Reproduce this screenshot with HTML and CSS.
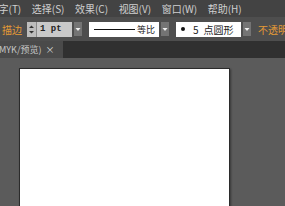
FILE: index.html
```html
<!DOCTYPE html>
<html>
<head>
<meta charset="utf-8">
<link rel="stylesheet" href="styles.css">
</head>
<body>
<div class="app">
  <div class="menubar">
    <span class="mi first">字(T)</span>
    <span class="mi">选择(S)</span>
    <span class="mi">效果(C)</span>
    <span class="mi">视图(V)</span>
    <span class="mi">窗口(W)</span>
    <span class="mi">帮助(H)</span>
  </div>
  <div class="toolbar">
    <span class="label">描边</span>
    <div class="spinner">
      <div class="arrows">
        <svg width="9" height="15" viewBox="0 0 9 15"><path d="M2 6 L4.5 3.5 L7 6Z M2 9 L4.5 11.5 L7 9Z" fill="#333"/></svg>
      </div>
      <div class="field mono">1 pt</div>
    </div>
    <div class="dd"><svg width="8" height="14" viewBox="0 0 8 14"><path d="M1.5 6 L6.5 6 L4 9Z" fill="#eee"/></svg></div>
    <div class="box linebox"><span class="line"></span><span class="txt">等比</span></div>
    <div class="dd"><svg width="8" height="14" viewBox="0 0 8 14"><path d="M1.5 6 L6.5 6 L4 9Z" fill="#eee"/></svg></div>
    <div class="box dotbox"><span class="dot"></span><span class="num">5</span><span class="txt">点圆形</span></div>
    <div class="dd"><svg width="8" height="14" viewBox="0 0 8 14"><path d="M1.5 6 L6.5 6 L4 9Z" fill="#eee"/></svg></div>
    <span class="label op">不透明</span>
  </div>
  <div class="tabbar">
    <div class="tab"><span class="tabtext">MYK/预览)</span><span class="close">×</span></div>
  </div>
  <div class="canvas">
    <div class="artboard"></div>
  </div>
</div>
</body>
</html>
```
FILE: styles.css
```css
* { box-sizing: border-box; }
html, body { margin: 0; padding: 0; }
body {
  width: 285px;
  height: 206px;
  overflow: hidden;
  background: #5b5b5b;
  font-family: "Noto Sans CJK SC", "Noto Sans", sans-serif;
}
.app { width: 285px; height: 206px; display: flex; flex-direction: column; overflow: hidden; }
.menubar {
  flex-shrink: 0;
  height: 17px;
  background: #434343;
  display: flex;
  align-items: center;
  color: #cfcfcf;
  font-size: 10px;
  white-space: nowrap;
}
.mi { margin-right: 10.5px; line-height: 16px; flex-shrink: 0; }
.mi.first { margin-left: -1.5px; }
.toolbar {
  flex-shrink: 0;
  height: 24px;
  background: #4e4e4e;
  display: flex;
  align-items: center;
  white-space: nowrap;
  padding-left: 2px;
  overflow: hidden;
}
.toolbar > * { flex-shrink: 0; }
.label {
  color: #e49a36;
  font-size: 10px;
  margin-right: 5px;
}
.label.op { margin-left: 0; margin-right: 0; font-size: 10px; }
.spinner { display: flex; height: 15px; }
.arrows {
  width: 10px;
  background: #bdbdbd;
  border-right: 1px solid #8a8a8a;
}
.arrows svg { display: block; }
.field {
  width: 35px;
  background: #c9c9c9;
  color: #222;
  font-size: 9px;
  padding-left: 3px;
  line-height: 15px;
}
.mono { font-family: "Liberation Mono", monospace; font-weight: bold; }
.dd {
  width: 8px;
  height: 14px;
  background: #747474;
  margin-left: 2px;
  margin-right: 7px;
}
.dd svg { display: block; }
.box {
  height: 15px;
  background: #fff;
  display: flex;
  align-items: center;
  color: #222;
  font-size: 9px;
  overflow: hidden;
}
.box > * { flex-shrink: 0; }
.linebox { width: 70px; padding-left: 5px; }
.line { width: 41px; height: 1px; background: #111; margin-right: 2px; }
.dotbox { width: 65px; padding-left: 5px; font-size: 10px; }
.dot { width: 4px; height: 4px; border-radius: 50%; background: #111; margin-right: 8px; }
.num { margin-right: 5px; }
.tabbar {
  flex-shrink: 0;
  height: 17px;
  background: #303030;
  display: flex;
}
.tab {
  width: 63px;
  background: #4a4a4a;
  display: flex;
  align-items: center;
  color: #c8c8c8;
  font-size: 9px;
  white-space: nowrap;
  overflow: hidden;
}
.tabtext { margin-left: -1px; }
.close { margin-left: 4px; font-size: 9px; color: #ddd; }
.canvas {
  flex: 1;
  padding-top: 10px;
  padding-left: 19px;
  overflow: hidden;
}
.artboard {
  width: 211px;
  height: 160px;
  background: #fff;
  border: 1px solid #2b2b2b;
  box-shadow: 1px 1px 2px rgba(0,0,0,0.4);
}
```
